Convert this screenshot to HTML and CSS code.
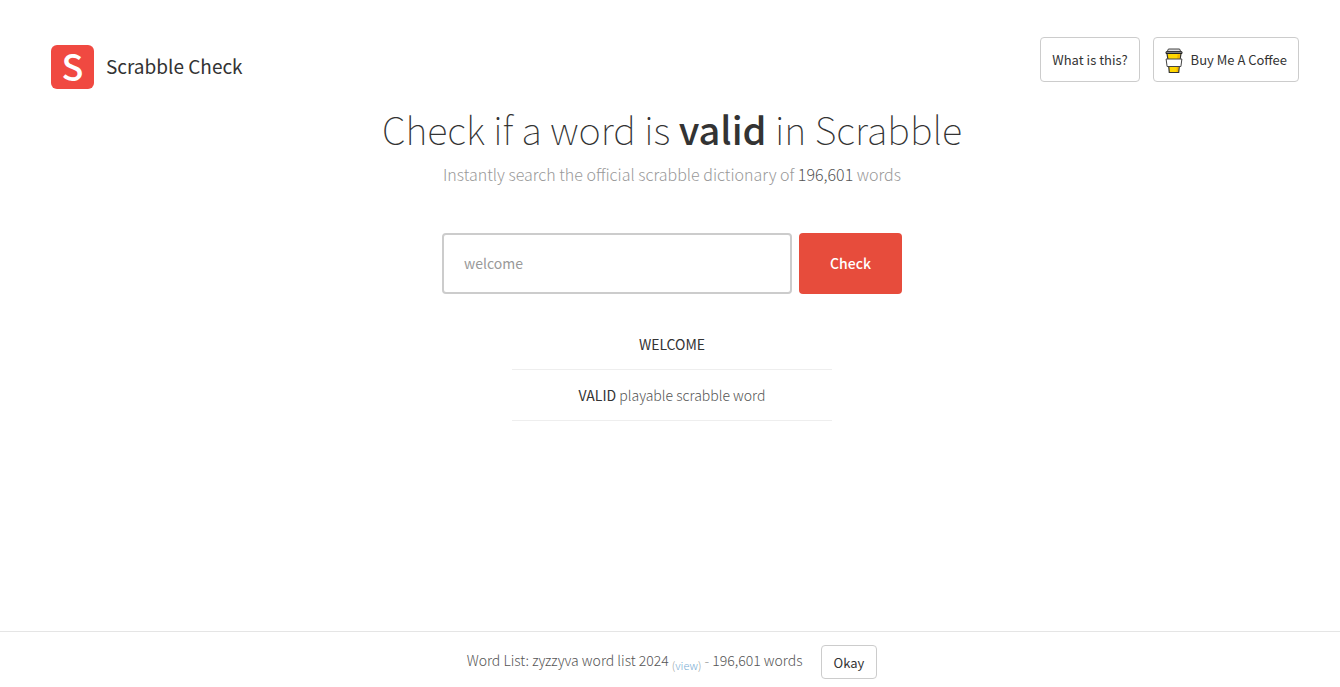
FILE: index.html
```html
<!DOCTYPE html>
<html lang="en">
<head>
<meta charset="utf-8">
<meta name="viewport" content="width=device-width, initial-scale=1">
<title>Scrabble Check</title>
<link rel="stylesheet" href="styles.css">
</head>
<body class="page">
<header class="header">
  <a class="brand" href="#"><span class="brand-mark" aria-hidden="true">S</span><span class="brand-name">Scrabble Check</span></a>
  <nav class="nav">
    <a class="button" href="#about">What is this?</a>
    <a class="button" href="#coffee">
      <svg class="cup" viewBox="0 0 18 26" aria-hidden="true">
        <path d="M2 5.500h14l-1.200 7.500-1.100 11.500H4.300L3.200 13z" fill="#ffd800" stroke="#333" stroke-width="1.200"/>
        <path d="M12.500 6.500h2.500l-1.100 7-1.100 10.500H11.500z" fill="#f5b400"/>
        <path d="M1.100 11h15.800l-1 7.500H2.100z" fill="#fff" stroke="#444" stroke-width="1"/>
        <path d="M3.400 1h11.200l1.200 2.700H2.200z" fill="#ddd" stroke="#444"/>
        <path d="M1 3.800h16v1.700H1z" fill="#aaa" stroke="#222"/>
      </svg>
      Buy Me A Coffee</a>
  </nav>
</header>
<main class="main">
  <h1 class="title">Check if a word is <strong class="title-strong">valid</strong> in Scrabble</h1>
  <p class="subtitle">Instantly search the official scrabble dictionary of <span class="count">196,601</span> words</p>
  <form class="search">
    <input class="search-input" type="text" placeholder="welcome" aria-label="Word to check">
    <button class="search-button" type="submit">Check</button>
  </form>
  <div class="results">
    <p class="result"><span class="strong">WELCOME</span></p>
    <p class="result"><span class="strong">VALID</span> playable scrabble word</p>
  </div>
</main>
<footer class="footer">
  <p class="footer-text">Word List: zyzzyva word list 2024 <sub class="note">(<a class="note-link" href="#list">view</a>)</sub> <span class="dash">-</span> 196,601 words</p>
  <button class="button button-small" type="button">Okay</button>
</footer>
</body>
</html>
```
FILE: styles.css
```css
* { box-sizing: border-box; }
.page {
  margin: 0;
  min-height: 100vh;
  display: flex;
  flex-direction: column;
  background: #fff;
  color: #333;
  font-family: "Noto Sans CJK SC", "Noto Sans", sans-serif;
  font-size: 14px;
  line-height: 24px;
}
.header {
  display: flex;
  justify-content: space-between;
  align-items: flex-start;
  padding: 37px 41px 0 51px;
}
.brand {
  display: flex;
  align-items: center;
  gap: 12px;
  margin-top: 8px;
  color: #333;
  text-decoration: none;
}
.brand-mark {
  width: 43px;
  height: 44px;
  border-radius: 6px;
  background: #f04941;
  color: #fff;
  font-size: 36px;
  font-weight: 500;
  line-height: 40px;
  text-align: center;
}
.brand-name { padding-bottom: 2px; font-size: 19px; }
.nav { display: flex; gap: 13px; }
.button {
  display: flex;
  align-items: center;
  gap: 8px;
  height: 45px;
  padding: 0 11px;
  border: 1px solid #ccc;
  border-radius: 4px;
  background: #fff;
  color: #333;
  font-family: inherit;
  font-size: 13px;
  text-decoration: none;
}
.button-small { height: 34px; padding: 0 12px; }
.cup { width: 18px; height: 26px; margin-top: 2px; }
.main {
  flex: 1;
  display: flex;
  flex-direction: column;
  align-items: center;
  padding: 14px 0 0 4px;
}
.title {
  margin: 0;
  font-size: 38px;
  font-weight: 100;
  line-height: 52px;
}
.title-strong { font-weight: 500; }
.subtitle {
  margin: 7px 0 0;
  color: #999;
  font-size: 16px;
  font-weight: 300;
}
.count { color: #555; }
.search { display: flex; gap: 7px; margin-top: 47px; }
.search-input {
  width: 350px;
  height: 61px;
  padding: 0 20px 2px;
  border: 2px solid #ccc;
  border-radius: 4px;
  color: #333;
  font-family: inherit;
  font-size: 14px;
}
.search-input::placeholder { color: #999; opacity: 1; }
.search-button {
  width: 103px;
  height: 61px;
  padding: 0 0 2px;
  border: 0;
  border-radius: 4px;
  background: #e74c3c;
  color: #fff;
  font-family: inherit;
  font-size: 14px;
  font-weight: 500;
}
.results { width: 320px; margin-top: 25px; }
.result {
  margin: 0;
  padding: 13px 0;
  border-bottom: 1px solid #eee;
  color: #555;
  font-weight: 300;
  text-align: center;
}
.strong { color: #333; font-weight: 400; }
.footer {
  display: flex;
  justify-content: center;
  align-items: flex-start;
  gap: 18px;
  padding: 13px 0 8px 4px;
  border-top: 1px solid #e5e5e5;
}
.footer-text { margin: 3px 0 0; color: #555; font-weight: 300; }
.note { color: #999; font-size: 11px; line-height: 0; }
.note-link { color: #7aaed4; text-decoration: none; }
.dash { color: #999; }
```
